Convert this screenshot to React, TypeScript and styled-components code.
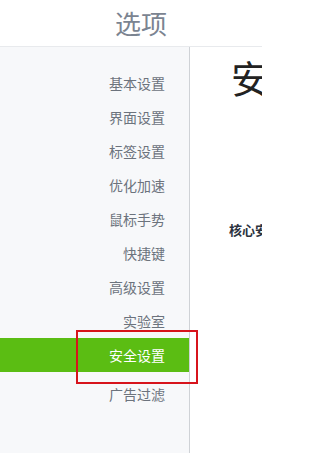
import React from 'react'
import styled, { createGlobalStyle } from 'styled-components'

const GlobalStyle = createGlobalStyle`
	html, body {
		margin: 0;
		padding: 0;
		background: #ffffff;
	}
	body {
		font-family: "Noto Sans CJK SC", "Noto Sans", sans-serif;
	}
`

const menuItems = [
	'基本设置',
	'界面设置',
	'标签设置',
	'优化加速',
	'鼠标手势',
	'快捷键',
	'高级设置',
	'实验室',
	'安全设置',
	'广告过滤',
]

const ACTIVE = '安全设置'

const App = () => {
	return (
		<>
			<GlobalStyle />
			<Page>
				<Header>
					<Title>选项</Title>
				</Header>
				<Body>
					<Sidebar>
						{menuItems.map((item) => (
							<MenuItem key={item} active={item === ACTIVE}>
								{item}
							</MenuItem>
						))}
						<Highlight />
					</Sidebar>
					<Content>
						<Heading>安</Heading>
						<SectionLabel>核心安全</SectionLabel>
					</Content>
				</Body>
			</Page>
		</>
	)
}

const Page = styled.div`
	width: 262px;
	height: 453px;
	overflow: hidden;
	display: flex;
	flex-direction: column;
	background: #ffffff;
`

const Header = styled.div`
	height: 46px;
	flex: none;
	border-bottom: 1px solid #e8eaed;
	display: flex;
	align-items: center;
	padding-left: 115px;
	box-sizing: content-box;
`

const Title = styled.h1`
	margin: 0;
	font-size: 26px;
	font-weight: 400;
	color: #7b8491;
	line-height: 1;
	white-space: nowrap;
`

const Body = styled.div`
	flex: 1;
	display: flex;
	min-height: 0;
`

const Sidebar = styled.nav`
	position: relative;
	width: 189px;
	flex: none;
	background: #f7f8fa;
	border-right: 1px solid #cfd2d6;
	padding-top: 19px;
	display: flex;
	flex-direction: column;
`

const MenuItem = styled.div<{ active?: boolean }>`
	height: 34px;
	flex: none;
	display: flex;
	align-items: center;
	justify-content: flex-end;
	padding-right: 24px;
	font-size: 14px;
	color: ${(props) => (props.active ? '#ffffff' : '#6c737d')};
	background: ${(props) => (props.active ? '#5bbd13' : 'transparent')};
	margin-bottom: ${(props) => (props.active ? '5px' : '0')};
	white-space: nowrap;
`

const Highlight = styled.div`
	position: absolute;
	left: 76px;
	top: 283px;
	width: 118px;
	height: 50px;
	border: 2px solid #d7141c;
	pointer-events: none;
`

const Content = styled.main`
	flex: 1;
	min-width: 0;
	padding: 4px 0 0 41px;
	overflow: hidden;
	white-space: nowrap;
`

const Heading = styled.div`
	font-size: 38px;
	line-height: 52px;
	color: #222222;
`

const SectionLabel = styled.div`
	margin-top: 117px;
	font-size: 13px;
	font-weight: 700;
	color: #2c3340;
	margin-left: -2px;
`

export default App
